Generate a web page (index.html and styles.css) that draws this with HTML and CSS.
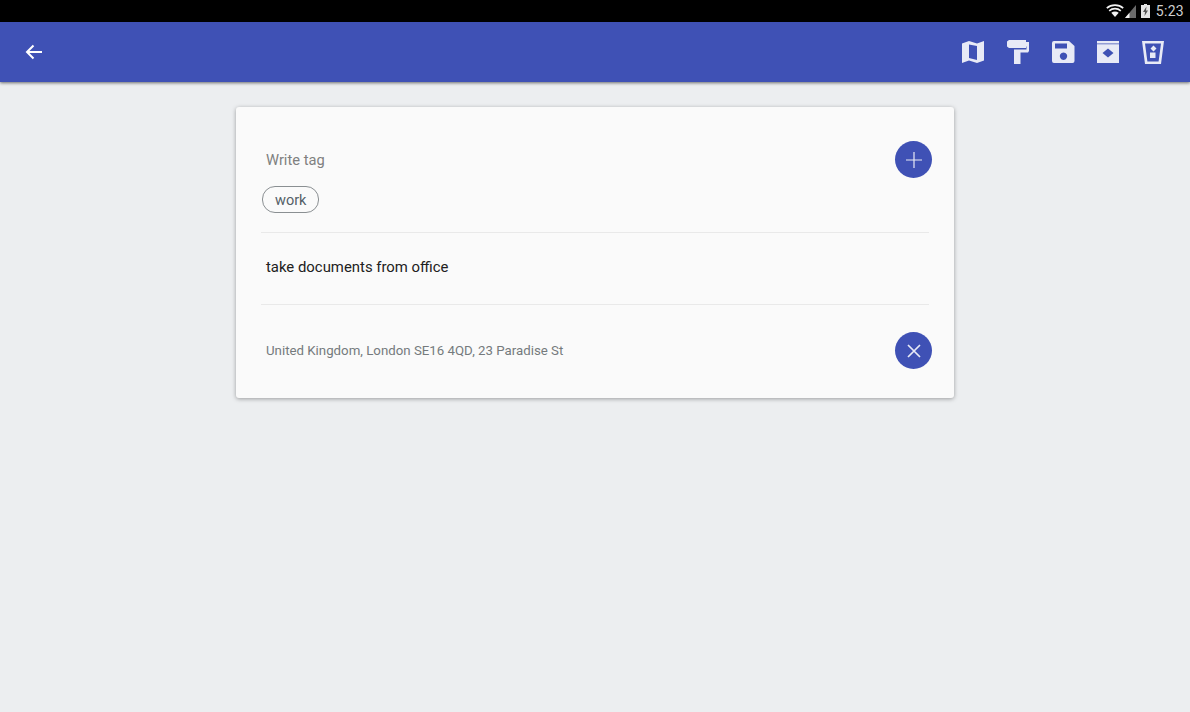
FILE: index.html
```html
<!DOCTYPE html>
<html>
  <head>
    <meta charset="utf-8">
    <link rel="stylesheet" href="styles.css">
  </head>
  <body>
    <div class="statusbar">
      <svg class="wifi" width="18" height="14" viewBox="0 0 18 14">
        <g fill="none" stroke="#f2f2f2" stroke-width="1.700">
          <path d="M.8 4.200C5.300.2 12.700.2 17.200 4.200"/>
          <path d="M3.200 6.800C6.500 4 11.500 4 14.800 6.800"/>
        </g>
        <path fill="#f2f2f2" d="M5.300 8.800C7.500 7.100 10.500 7.100 12.700 8.800L9 13z"/>
      </svg>
      <svg class="signal" width="11" height="13" viewBox="0 0 11 13">
        <path fill="#6a6a6a" d="M11 0V13H0z"/>
        <path fill="#f2f2f2" d="M4.500 7.700V13H0z"/>
      </svg>
      <svg class="battery" width="9" height="14" viewBox="0 0 9 14">
        <path fill="#e4e4e4" d="M3 0H6V1H9V14H0V1H3z"/>
        <path fill="#555" d="M5.500 2.500L2 8H4L3.500 12L7 6.500H5z"/>
      </svg>
      <span class="clock">5:23</span>
    </div>

    <div class="toolbar">
      <svg class="back" width="18" height="16" viewBox="0 0 18 16">
        <path fill="none" stroke="#fff" stroke-width="2" d="M17 8H2M8.500 1.500L2 8l6.500 6.500"/>
      </svg>
      <div class="actions">
        <svg width="24" height="24" viewBox="0 0 24 24">
          <path fill="#e8eaf6" fill-rule="evenodd" d="M1 3.500L8 1l8 2.500L23 1V20.500L16 23l-8-2.500L1 23zM8 4.500V18l8 2V6z"/>
        </svg>
        <svg width="24" height="24" viewBox="0 0 24 24">
          <path fill="#e8eaf6" d="M3 0H20V2H23V11L22 12.500H14.500V24H8V9.500H20.500V6.500H20V8H3L1 6.500V1.500z"/>
        </svg>
        <svg width="24" height="24" viewBox="0 0 24 24">
          <path fill="#e8eaf6" fill-rule="evenodd" d="M3 1H18L23.500 6V21a2 2 0 0 1-2 2H3a2 2 0 0 1-2-2V3a2 2 0 0 1 2-2zM4 3.500V8.500H16V3.500zM12.500 12.500a3.700 3.700 0 1 0 .01 0z"/>
        </svg>
        <svg width="24" height="24" viewBox="0 0 24 24">
          <path fill="#e8eaf6" fill-rule="evenodd" d="M1 1H23V23H1zM1 3.500V4.200H23V3.500zM12 8.500L6.500 13 12 17.500 17.500 13z"/>
        </svg>
        <svg width="24" height="24" viewBox="0 0 24 24">
          <path fill="#e8eaf6" fill-rule="evenodd" d="M1 1H23L20 24H4zM4 3.500L6.400 21.500H17.600L20 3.500zM12.500 5.500L15.500 8.500 12.500 11.500 9.500 8.500zM9 12.500H14.500V18H9z"/>
        </svg>
      </div>
    </div>

    <div class="content">
      <div class="card">
        <div class="row tag-row">
          <span class="placeholder">Write tag</span>
          <button class="round">
            <svg width="16" height="16" viewBox="0 0 16 16">
              <path fill="none" stroke="#e8eaf6" stroke-width="1.200" d="M8 0V16M0 8H16"/>
            </svg>
          </button>
        </div>
        <div class="tags"><span class="tag">work</span></div>
        <div class="divider"></div>
        <div class="title">take documents from office</div>
        <div class="divider"></div>
        <div class="row address-row">
          <span class="address">United Kingdom, London SE16 4QD, 23 Paradise St</span>
          <button class="round">
            <svg width="14" height="14" viewBox="0 0 14 14">
              <path fill="none" stroke="#e8eaf6" stroke-width="1.700" d="M1 1L13 13M13 1L1 13"/>
            </svg>
          </button>
        </div>
      </div>
    </div>
  </body>
</html>
```

FILE: styles.css
```css
html, body {
  margin: 0;
  height: 100%;
}
body {
  width: 1190px;
  height: 712px;
  overflow: hidden;
  background: #eceef0;
  font-family: Roboto, "Liberation Sans", sans-serif;
  display: flex;
  flex-direction: column;
}
.statusbar {
  height: 22px;
  background: #000;
  display: flex;
  align-items: center;
  justify-content: flex-end;
  padding-right: 6px;
  flex-shrink: 0;
}
.wifi {
  margin-right: 1px;
}
.signal {
  margin-right: 5px;
}
.battery {
  margin-right: 6px;
}
.clock {
  color: #cfcfcf;
  font-size: 14px;
  letter-spacing: 0.3px;
}
.toolbar {
  height: 60px;
  background: #3f51b5;
  box-shadow: 0 1px 3px rgba(0, 0, 0, 0.55);
  display: flex;
  align-items: center;
  justify-content: space-between;
  padding: 0 25px;
  flex-shrink: 0;
  position: relative;
}
.actions {
  display: flex;
  gap: 21px;
}
.actions svg {
  display: block;
}
.content {
  display: flex;
  justify-content: center;
  padding-top: 25px;
}
.card {
  width: 718px;
  height: 291px;
  box-sizing: border-box;
  background: #fafafa;
  border-radius: 3px;
  box-shadow: 0 1px 4px rgba(0, 0, 0, 0.35);
  padding: 34px 22px 0 25px;
}
.row {
  display: flex;
  align-items: center;
  justify-content: space-between;
}
.placeholder {
  font-size: 14.700px;
  color: #7f8080;
  padding-left: 5px;
  padding-top: 1px;
}
.round {
  width: 37px;
  height: 37px;
  padding: 0;
  border: 0;
  border-radius: 50%;
  background: #3f51b5;
  display: flex;
  align-items: center;
  justify-content: center;
}
.tags {
  margin-top: 8px;
}
.tag {
  display: inline-block;
  height: 25px;
  line-height: 27px;
  margin-left: 1px;
  padding: 0 12px;
  border: 1px solid #8a8f92;
  border-radius: 13px;
  font-size: 14.500px;
  color: #546067;
}
.divider {
  height: 1px;
  background: #e9e9e9;
  margin-right: 3px;
}
.tags + .divider {
  margin-top: 19px;
}
.title {
  height: 71px;
  line-height: 68px;
  font-size: 14.900px;
  color: #212121;
  padding-left: 5px;
}
.address-row {
  margin-top: 27px;
}
.address {
  font-size: 13.270px;
  color: #757a7d;
  padding-left: 5px;
}
```
